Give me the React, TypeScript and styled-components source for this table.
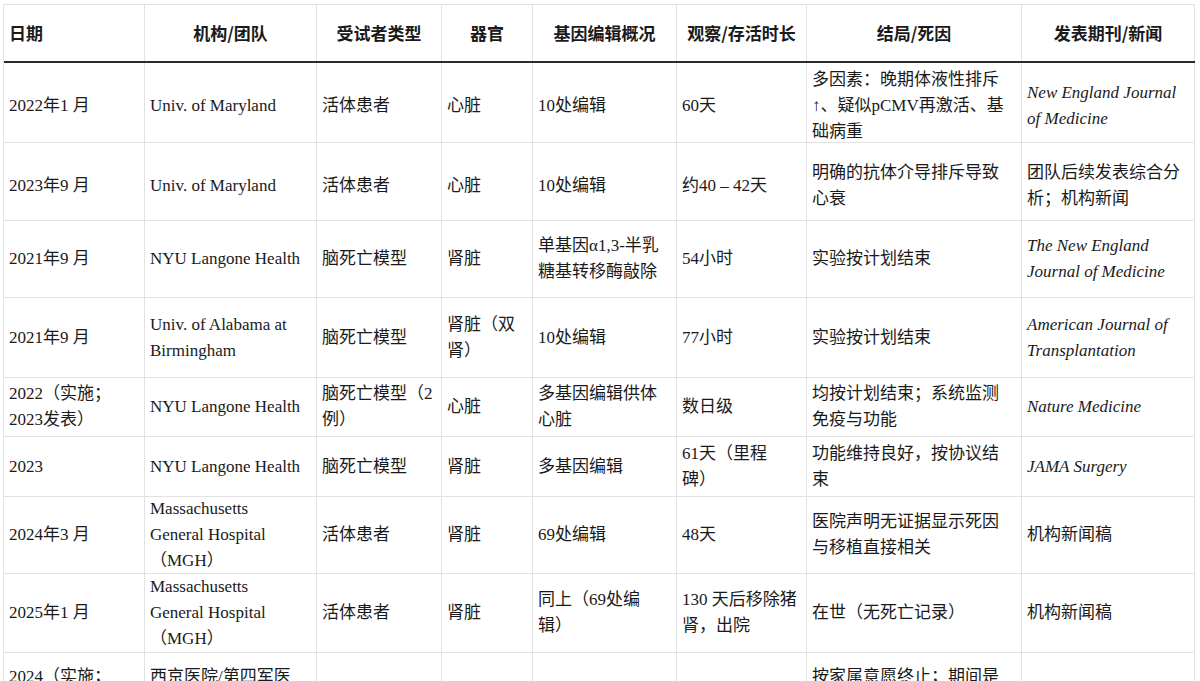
import styled, { createGlobalStyle } from 'styled-components';

const GlobalStyle = createGlobalStyle`
  html, body {
    margin: 0;
    padding: 0;
    background: #ffffff;
  }
  body {
    font-family: "Liberation Serif", "Noto Sans CJK SC", serif;
    color: #1a1a1a;
    overflow: hidden;
  }
`;

const COLS = [141, 172, 125, 91, 144, 130, 215, 173];

const Page = styled.div`
  width: 1200px;
  height: 681px;
  padding: 4px 0 0 3px;
  box-sizing: border-box;
  overflow: hidden;
`;

const Table = styled.div`
  display: flex;
  flex-direction: column;
  width: ${COLS.reduce((a, b) => a + b, 0)}px;
  border-top: 1px solid #e2e2e2;
  border-left: 1px solid #e2e2e2;
`;

const Row = styled.div<{ $height: number; $head?: boolean }>`
  display: grid;
  grid-template-columns: ${COLS.map(c => `${c}px`).join(' ')};
  height: ${({ $height }) => $height}px;
  flex-shrink: 0;
  border-bottom: ${({ $head }) => ($head ? '2px solid #2a2a2a' : '1px solid #e2e2e2')};
  box-sizing: border-box;
`;

const Cell = styled.div<{ $italic?: boolean; $shift?: number }>`
  display: flex;
  flex-direction: column;
  justify-content: center;
  padding: ${({ $shift }) => $shift || 0}px 4px 0 5px;
  border-right: 1px solid #e2e2e2;
  font-size: 17px;
  line-height: 26px;
  font-style: ${({ $italic }) => ($italic ? 'italic' : 'normal')};
  overflow: hidden;
  box-sizing: border-box;
`;

const HeadCell = styled(Cell)<{ $left?: boolean }>`
  align-items: ${({ $left }) => ($left ? 'flex-start' : 'center')};
  padding-left: ${({ $left }) => ($left ? '5px' : '4px')};
  font-family: "Noto Sans CJK SC", "Liberation Sans", sans-serif;
  font-weight: 700;
  font-size: 17px;
  color: #1a1a1a;
`;

const Line = styled.span`
  display: block;
  white-space: nowrap;
`;

type CellData = { lines: string[]; italic?: boolean };

const c = (...lines: string[]): CellData => ({ lines });
const it = (...lines: string[]): CellData => ({ lines, italic: true });

const HEADERS = ['日期', '机构/团队', '受试者类型', '器官', '基因编辑概况', '观察/存活时长', '结局/死因', '发表期刊/新闻'];

const ROWS: { height: number; shift?: number; cells: CellData[] }[] = [
  {
    height: 80,
    shift: 7,
    cells: [
      c('2022年1 月'), c('Univ. of Maryland'), c('活体患者'), c('心脏'), c('10处编辑'), c('60天'),
      c('多因素：晚期体液性排斥', '↑、疑似pCMV再激活、基', '础病重'),
      it('New England Journal', 'of Medicine'),
    ],
  },
  {
    height: 78,
    shift: 9,
    cells: [
      c('2023年9 月'), c('Univ. of Maryland'), c('活体患者'), c('心脏'), c('10处编辑'), c('约40 – 42天'),
      c('明确的抗体介导排斥导致', '心衰'),
      c('团队后续发表综合分', '析；机构新闻'),
    ],
  },
  {
    height: 77,
    cells: [
      c('2021年9 月'), c('NYU Langone Health'), c('脑死亡模型'), c('肾脏'),
      c('单基因α1,3-半乳', '糖基转移酶敲除'), c('54小时'), c('实验按计划结束'),
      it('The New England', 'Journal of Medicine'),
    ],
  },
  {
    height: 80,
    cells: [
      c('2021年9 月'), c('Univ. of Alabama at', 'Birmingham'), c('脑死亡模型'), c('肾脏（双', '肾）'),
      c('10处编辑'), c('77小时'), c('实验按计划结束'),
      it('American Journal of', 'Transplantation'),
    ],
  },
  {
    height: 59,
    cells: [
      c('2022（实施；', '2023发表）'), c('NYU Langone Health'), c('脑死亡模型（2', '例）'), c('心脏'),
      c('多基因编辑供体', '心脏'), c('数日级'), c('均按计划结束；系统监测', '免疫与功能'),
      it('Nature Medicine'),
    ],
  },
  {
    height: 60,
    cells: [
      c('2023'), c('NYU Langone Health'), c('脑死亡模型'), c('肾脏'), c('多基因编辑'),
      c('61天（里程', '碑）'), c('功能维持良好，按协议结', '束'),
      it('JAMA Surgery'),
    ],
  },
  {
    height: 77,
    cells: [
      c('2024年3 月'), c('Massachusetts', 'General Hospital', '（MGH）'), c('活体患者'), c('肾脏'),
      c('69处编辑'), c('48天'), c('医院声明无证据显示死因', '与移植直接相关'),
      c('机构新闻稿'),
    ],
  },
  {
    height: 79,
    cells: [
      c('2025年1 月'), c('Massachusetts', 'General Hospital', '（MGH）'), c('活体患者'), c('肾脏'),
      c('同上（69处编', '辑）'), c('130 天后移除猪', '肾，出院'), c('在世（无死亡记录）'),
      c('机构新闻稿'),
    ],
  },
  {
    height: 100,
    cells: [
      c('2024（实施；', '2025发表）', ''), c('西京医院/第四军医', '大学', ''), c('脑死亡模型'), c('肝脏'),
      c('多基因编辑'), c('10天'), c('按家属意愿终止；期间是', '否排斥等待评估', ''),
      c('Nature'),
    ],
  },
];

export default function App() {
  return (
    <Page>
      <GlobalStyle />
      <Table>
        <Row $height={58} $head>
          {HEADERS.map((h, i) => (
            <HeadCell key={h} $left={i === 0}>{h}</HeadCell>
          ))}
        </Row>
        {ROWS.map((row, r) => (
          <Row key={r} $height={row.height}>
            {row.cells.map((cell, i) => (
              <Cell key={i} $italic={cell.italic} $shift={row.shift}>
                {cell.lines.map((l, j) => (
                  <Line key={j}>{l || '\u00a0'}</Line>
                ))}
              </Cell>
            ))}
          </Row>
        ))}
      </Table>
    </Page>
  );
}
